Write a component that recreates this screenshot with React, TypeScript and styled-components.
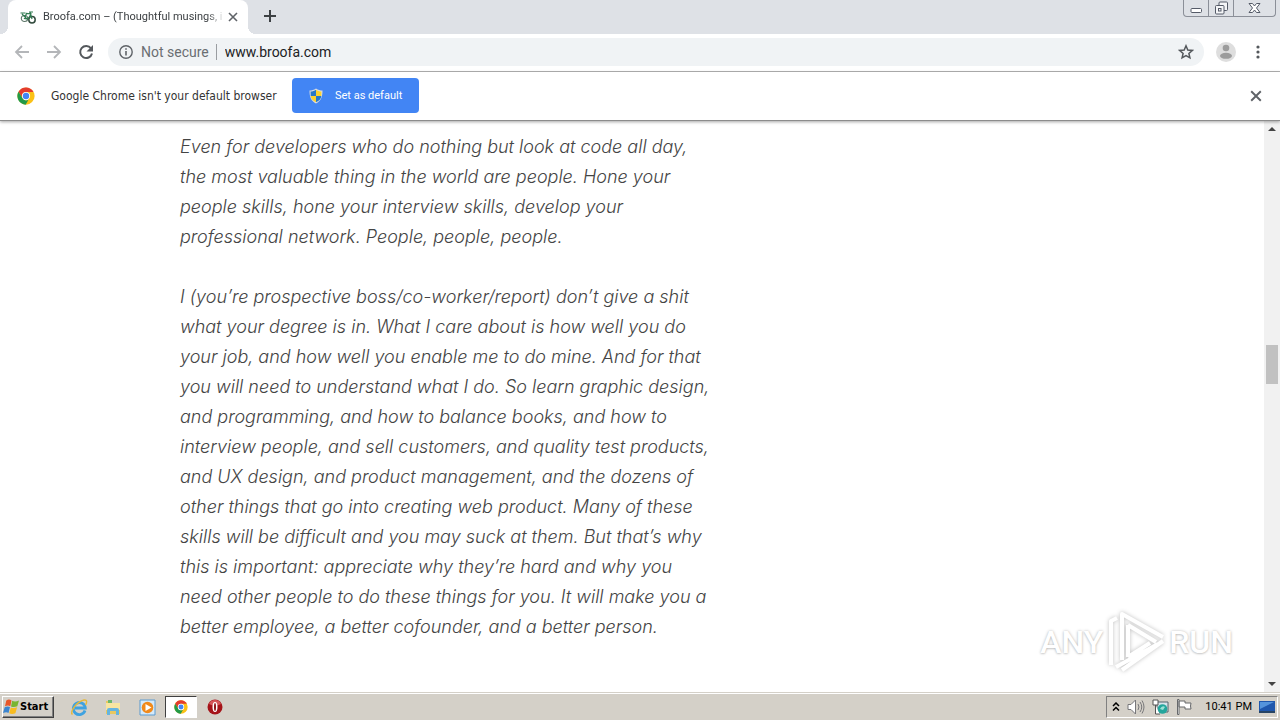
import React from "react";
import styled, { createGlobalStyle } from "styled-components";

const uiFont = `"Noto Sans", "DejaVu Sans", sans-serif`;

const GlobalStyle = createGlobalStyle`
  * { box-sizing: border-box; }
  body { margin: 0; background: #fff; overflow: hidden; }
  button, input { font: inherit; color: inherit; }
  svg { display: block; flex: none; }
`;

const Desktop = styled.div`
  display: flex;
  flex-direction: column;
  height: 100vh;
  font-family: ${uiFont};
`;

const TabStrip = styled.header`
  display: flex;
  align-items: flex-start;
  height: 34px;
  flex: none;
  padding-left: 8px;
  background: #dee1e6;
`;

const Tab = styled.div`
  position: relative;
  display: flex;
  align-items: center;
  width: 240px;
  height: 34px;
  padding: 0 10px 0 12px;
  border-radius: 8px 8px 0 0;
  background: #fff;
  &::before, &::after {
    content: "";
    position: absolute;
    bottom: 0;
    width: 8px;
    height: 8px;
  }
  &::before { left: -8px; background: radial-gradient(circle at 0 0, #dee1e6 8px, #fff 8px); }
  &::after { right: -8px; background: radial-gradient(circle at 100% 0, #dee1e6 8px, #fff 8px); }
`;

const TabTitle = styled.span`
  flex: 1;
  margin: 0 4px 0 7px;
  white-space: nowrap;
  font: 11px/16px Roboto, ${uiFont};
  color: #3c4043;
  mask-image: linear-gradient(to right, #000 164px, transparent 182px);
`;

const IconButton = styled.button<{ $w?: number }>`
  display: flex;
  align-items: center;
  justify-content: center;
  flex: none;
  width: ${(p) => p.$w ?? 32}px;
  height: 32px;
  padding: 0;
  border: 0;
  background: none;
`;

const WindowControls = styled.div`
  display: flex;
  height: 17px;
  margin: 0 4px 0 auto;
  border: 1px solid #8b8f98;
  border-top: 0;
  border-radius: 0 0 4px 4px;
`;

const WindowButton = styled.button<{ $w: number }>`
  display: flex;
  align-items: center;
  justify-content: center;
  width: ${(p) => p.$w}px;
  padding: 0;
  border: 0;
  background: none;
  & + & { border-left: 1px solid #8b8f98; }
`;

const Toolbar = styled.nav`
  display: flex;
  align-items: center;
  height: 38px;
  flex: none;
  padding: 0 6px 2px;
  border-bottom: 1px solid #b3b3b3;
  background: #fff;
`;

const AddressBar = styled.div`
  display: flex;
  align-items: center;
  flex: 1;
  height: 28px;
  margin: 0 6px;
  padding: 0 2px 0 10px;
  border-radius: 14px;
  background: #f0f3f5;
  font: 14px/20px Roboto, ${uiFont};
  color: #6a6e72;
`;

const Security = styled.span`
  margin-left: 7px;
  padding-right: 7px;
  border-right: 1px solid #9a9da1;
  line-height: 16px;
  white-space: nowrap;
`;

const UrlInput = styled.input`
  flex: 1;
  min-width: 0;
  padding: 0 8px;
  border: 0;
  outline: 0;
  background: none;
  color: #202124;
`;

const InfoBar = styled.section`
  position: relative;
  display: flex;
  align-items: center;
  height: 49px;
  flex: none;
  padding: 0 8px 1px 17px;
  border-bottom: 1px solid #8c8c8c;
  background: #fff;
  box-shadow: 0 1px 3px rgba(0, 0, 0, 0.35);
`;

const InfoText = styled.span`
  margin: 0 12px 0 16px;
  width: 229px;
  white-space: nowrap;
  font: 12px/18px "DejaVu Sans Condensed", "DejaVu Sans", sans-serif;
  color: #333;
`;

const DefaultButton = styled.button`
  display: flex;
  align-items: center;
  gap: 11px;
  width: 127px;
  height: 35px;
  padding: 0 16px;
  border: 0;
  border-radius: 4px;
  background: #4285f4;
  color: #fff;
  font: 11px/16px Roboto, ${uiFont};
  white-space: nowrap;
`;

const Spacer = styled.div`
  flex: 1;
`;

const Viewport = styled.div`
  display: flex;
  flex: 1;
  min-height: 0;
  background: #fff;
`;

const Page = styled.main`
  position: relative;
  flex: 1;
  padding: 11px 24px 0 180px;
`;

const Paragraph = styled.p`
  margin: 0 0 30px;
  white-space: nowrap;
  font: italic 300 18px/30px Inter, "Liberation Sans", sans-serif;
  color: #444;
`;

const Scrollbar = styled.div`
  display: flex;
  flex-direction: column;
  align-items: center;
  width: 16px;
  background: #f1f1f1;
`;

const ScrollButton = styled.button`
  display: flex;
  align-items: center;
  justify-content: center;
  width: 16px;
  height: 16px;
  padding: 0;
  border: 0;
  background: none;
`;

const Track = styled.div`
  display: flex;
  flex-direction: column;
  flex: 1;
`;

const TrackGap = styled.div<{ $grow: number }>`
  flex: ${(p) => p.$grow};
`;

const Thumb = styled.div`
  width: 12px;
  height: 39px;
  background: #c1c1c1;
`;

const Watermark = styled.div`
  position: absolute;
  right: 31px;
  bottom: 18px;
  display: flex;
  align-items: center;
  gap: 4px;
  color: #fff;
  font: 500 32px/64px Roboto, sans-serif;
  text-shadow: 0 0 3px rgba(0, 0, 0, 0.25), 0 1px 2px rgba(0, 0, 0, 0.12);
  svg { filter: drop-shadow(0 0 2px rgba(0, 0, 0, 0.25)); }
`;

const Taskbar = styled.footer`
  display: flex;
  align-items: center;
  height: 28px;
  flex: none;
  padding: 1px 2px 0;
  border-top: 1px solid #d4d0c8;
  box-shadow: inset 0 1px #fff;
  background: #d4d0c8;
`;

const StartButton = styled.button`
  display: flex;
  align-items: center;
  width: 52px;
  height: 22px;
  margin-right: 9px;
  padding: 0;
  border: 1px solid;
  border-color: #fff #404040 #404040 #fff;
  box-shadow: inset -1px -1px #808080;
  background: #d4d0c8;
  color: #000;
  font: bold 11px/16px "DejaVu Sans Condensed", "DejaVu Sans", sans-serif;
`;

const TaskButton = styled.button<{ $active?: boolean }>`
  display: flex;
  align-items: center;
  justify-content: center;
  width: 32px;
  height: 22px;
  margin-right: 2px;
  padding: 0;
  border: 1px solid;
  border-color: ${(p) => (p.$active ? "#404040 #fff #fff #404040" : "transparent")};
  background: ${(p) => (p.$active ? "#fff" : "none")};
`;

const Tray = styled.div`
  display: flex;
  align-items: center;
  gap: 7px;
  height: 22px;
  margin-left: auto;
  padding: 0 2px 0 5px;
  border: 1px solid;
  border-color: #808080 #fff #fff #808080;
`;

const Clock = styled.time`
  margin-left: 5px;
  white-space: nowrap;
  color: #000;
  font: 11px/16px Roboto, ${uiFont};
`;

const ChromeLogo = ({ size }: { size: number }) => (
  <svg width={size} height={size} viewBox="0 0 48 48" aria-hidden="true">
    <circle cx="24" cy="24" r="23" fill="#fbc116" />
    <path d="M4 12.600A23 23 0 0 1 44 13H24A11 11 0 0 0 14.500 29.500z" fill="#e33b2e" />
    <path d="M4 12.600 14.500 29.500A11 11 0 0 0 31 33L23 47A23 23 0 0 1 4 12.600z" fill="#229a48" />
    <circle cx="24" cy="24" r="11" fill="#fff" />
    <circle cx="24" cy="24" r="8.500" fill="#4285f4" />
  </svg>
);

const BikeIcon = () => (
  <svg width="16" height="16" viewBox="0 0 16 16" fill="none" aria-hidden="true">
    <ellipse cx="4.500" cy="9.500" rx="3.200" ry="3" stroke="#5b7567" strokeWidth="1.100" />
    <circle cx="12" cy="10.800" r="3.200" stroke="#334b3e" strokeWidth="1.500" />
    <path d="M.5 4h5M4.500 9.500l2-5 4.500.5-3 5zM9 3h4M10 3l2 7M2 5l5 5" stroke="#2f7a50" strokeWidth="1.200" />
  </svg>
);

const CrossIcon = ({ size, color = "#5f6368" }: { size: number; color?: string }) => (
  <svg width={size} height={size} viewBox="0 0 10 10" aria-hidden="true">
    <path d="M1 1l8 8M9 1L1 9" stroke={color} strokeWidth="1.600" />
  </svg>
);

const ArrowIcon = ({ flip }: { flip?: boolean }) => (
  <svg width="16" height="16" viewBox="0 0 16 16" fill="none" stroke="#b4b6b9" strokeWidth="1.800" aria-hidden="true">
    <path d={flip ? "M1 8h13M8 2l6 6-6 6" : "M15 8H2M8 2L2 8l6 6"} />
  </svg>
);

const ShieldIcon = () => (
  <svg width="16" height="16" viewBox="0 0 16 16" aria-hidden="true">
    <path d="M8 .5C6 2 3.500 2.500 1.500 2.500 1.500 9 3 13 8 15.500 13 13 14.500 9 14.500 2.500 12.500 2.500 10 2 8 .5z" fill="#d9dde2" />
    <path d="M8 1.800C6.500 3 4.500 3.500 2.600 3.600L2.700 8H8z" fill="#2778c8" />
    <path d="M8 1.800c1.500 1.200 3.500 1.700 5.400 1.800L13.300 8H8z" fill="#fbd22f" />
    <path d="M2.700 8H8v6.300C4.800 12.700 3 11 2.700 8z" fill="#fbd22f" />
    <path d="M13.300 8H8v6.300c3.200-1.600 5-3.300 5.300-6.300z" fill="#2778c8" />
  </svg>
);

const WindowsFlag = () => (
  <svg width="17" height="18" viewBox="0 0 17 16" aria-hidden="true">
    <path d="M3.300 1.500C5.500 0 7 .5 8.500 1.500L7.300 7.200C5.800 6.400 4.300 6.200 2 7.300z" fill="#e8572a" />
    <path d="M9.200 1.800c1.800.9 4.300.9 6.800-.3l-1.700 5.800c-2.400 1.100-4.500 1-6.300.2z" fill="#79b532" />
    <path d="M1.700 8.200c2.300-1.100 3.800-.9 5.300-.1L5.500 14C4 13 2.500 12.900 0 14.100z" fill="#3b85d0" />
    <path d="M7.800 8.400c1.800.8 4 .9 6.300-.2l-1.700 6c-2.300 1.100-4.500 1-6.200.1z" fill="#f8bc20" />
  </svg>
);

const IeIcon = () => (
  <svg width="18" height="18" viewBox="0 0 18 18" fill="none" aria-hidden="true">
    <path d="M15 12.500A6 6 0 1 1 15.300 10H5" stroke="#3fa2e0" strokeWidth="2.800" />
    <path d="M2.500 16.500C-1 14 7 3.500 14 2c4-.5 2.500 3.500 1.500 5" stroke="#e6b83a" strokeWidth="1.400" />
  </svg>
);

const FolderIcon = () => (
  <svg width="18" height="18" viewBox="0 0 18 18" aria-hidden="true">
    <path d="M2 3h5l1 2h8v11H2z" fill="#e9c860" />
    <path d="M4 2h4v3H4z" fill="#6cb86a" />
    <path d="M2 5h14v7H2z" fill="#f8e5a0" />
    <path d="M3 17v-5q0-2 2-2h8q2 0 2 2v5h-3v-4H6v4z" fill="#65b4df" />
  </svg>
);

const PlayerIcon = () => (
  <svg width="17" height="17" viewBox="0 0 17 17" aria-hidden="true">
    <path d="M1 1h15v15H1z" fill="#d5eafa" stroke="#5b9bd0" />
    <circle cx="8.500" cy="8.500" r="5.800" fill="#f18a1b" />
    <path d="M6.500 5l6 3.500-6 3.500z" fill="#fff" />
  </svg>
);

const OperaIcon = () => (
  <svg width="16" height="16" viewBox="0 0 16 16" aria-hidden="true">
    <circle cx="8" cy="8" r="7.500" fill="#a51319" />
    <path d="M2 5a6.500 6.500 0 0 1 12 0q-6 3-12 0z" fill="#d6575a" />
    <ellipse cx="8" cy="8" rx="2.500" ry="5" fill="#fff" />
    <ellipse cx="8" cy="8" rx="1" ry="4" fill="#8c1014" />
  </svg>
);

const App = () => (
  <Desktop>
    <GlobalStyle />
    <TabStrip>
      <Tab>
        <BikeIcon />
        <TabTitle>Broofa.com – (Thoughtful musings, i</TabTitle>
        <IconButton $w={12} aria-label="Close tab"><CrossIcon size={10} /></IconButton>
      </Tab>
      <IconButton $w={44} aria-label="New tab">
        <svg width="12" height="12" viewBox="0 0 12 12" stroke="#3c4043" strokeWidth="2"><path d="M6 0v12M0 6h12" /></svg>
      </IconButton>
      <WindowControls>
        <WindowButton $w={24} aria-label="Minimize">
          <svg width="13" height="12" viewBox="0 0 13 12" fill="#fff" stroke="#555b68"><rect x="1" y="6.500" width="10.500" height="4" rx="1" /></svg>
        </WindowButton>
        <WindowButton $w={25} aria-label="Restore">
          <svg width="13" height="14" viewBox="0 0 13 14" fill="#f4f5f7" stroke="#555b68"><rect x="4" y="1" width="8.500" height="8.500" rx="1" /><rect x=".5" y="4.500" width="8.500" height="8.500" rx="1" /><rect x="3.500" y="7.500" width="2.500" height="2.500" /></svg>
        </WindowButton>
        <WindowButton $w={42} aria-label="Close">
          <svg width="13" height="12" viewBox="0 0 13 12" fill="#fff" stroke="#555b68"><path d="M1 1.500h3.500l2 2.500 2-2.500H12L8.500 6l3.500 4.500H8.500l-2-2.500-2 2.500H1L4.500 6z" /></svg>
        </WindowButton>
      </WindowControls>
    </TabStrip>
    <Toolbar>
      <IconButton aria-label="Back"><ArrowIcon /></IconButton>
      <IconButton aria-label="Forward"><ArrowIcon flip /></IconButton>
      <IconButton aria-label="Reload">
        <svg width="16" height="16" viewBox="0 0 16 16"><path d="M13 4.400A6 6 0 1 0 14 9.500" fill="none" stroke="#54585c" strokeWidth="2" /><path d="M15 1v6.500H8.500z" fill="#54585c" /></svg>
      </IconButton>
      <AddressBar>
        <svg width="16" height="16" viewBox="0 0 16 16" fill="none" stroke="#5f6368"><circle cx="8" cy="8" r="6.200" strokeWidth="1.400" /><path d="M8 7v4.500M8 4.200v1.600" strokeWidth="1.600" /></svg>
        <Security>Not secure</Security>
        <UrlInput aria-label="Address" defaultValue="www.broofa.com" />
        <IconButton aria-label="Bookmark">
          <svg width="16" height="16" viewBox="0 0 16 16" fill="none" stroke="#54585c" strokeWidth="1.500"><path d="M8 1.800l1.800 4.200 4.500.4-3.400 3 1 4.400L8 11.500l-3.900 2.300 1-4.400-3.400-3L6.200 6z" /></svg>
        </IconButton>
      </AddressBar>
      <IconButton aria-label="Profile">
        <svg width="20" height="20" viewBox="0 0 20 20"><circle cx="10" cy="10" r="10" fill="#dedede" /><circle cx="10" cy="6" r="3.300" fill="#9c9c9c" /><ellipse cx="10" cy="13.800" rx="6" ry="3" fill="#9c9c9c" /></svg>
      </IconButton>
      <IconButton aria-label="Menu">
        <svg width="4" height="14" viewBox="0 0 4 14" fill="#54585c"><circle cx="2" cy="2" r="1.600" /><circle cx="2" cy="7" r="1.600" /><circle cx="2" cy="12" r="1.600" /></svg>
      </IconButton>
    </Toolbar>
    <InfoBar>
      <ChromeLogo size={18} />
      <InfoText>Google Chrome isn't your default browser</InfoText>
      <DefaultButton><ShieldIcon />Set as default</DefaultButton>
      <Spacer />
      <IconButton aria-label="Dismiss"><CrossIcon size={12} /></IconButton>
    </InfoBar>
    <Viewport>
      <Page>
        <Paragraph>
          Even for developers who do nothing but look at code all day,<br />
          the most valuable thing in the world are people. Hone your<br />
          people skills, hone your interview skills, develop your<br />
          professional network. People, people, people.
        </Paragraph>
        <Paragraph>
          I (you’re prospective boss/co-worker/report) don’t give a shit<br />
          what your degree is in. What I care about is how well you do<br />
          your job, and how well you enable me to do mine. And for that<br />
          you will need to understand what I do. So learn graphic design,<br />
          and programming, and how to balance books, and how to<br />
          interview people, and sell customers, and quality test products,<br />
          and UX design, and product management, and the dozens of<br />
          other things that go into creating web product. Many of these<br />
          skills will be difficult and you may suck at them. But that’s why<br />
          this is important: appreciate why they’re hard and why you<br />
          need other people to do these things for you. It will make you a<br />
          better employee, a better cofounder, and a better person.
        </Paragraph>
        <Watermark>
          <span>ANY</span>
          <svg width="58" height="64" viewBox="0 0 58 64" fill="none" stroke="#fff" strokeWidth="4" strokeLinejoin="round">
            <path d="M15 50V4l41 23M4 55V11l6-3M21 15l28 17M21 15v32M56 31L15 60M51 34L9 57M21 47l22-14" />
          </svg>
          <span>RUN</span>
        </Watermark>
      </Page>
      <Scrollbar>
        <ScrollButton aria-label="Scroll up"><svg width="8" height="4" viewBox="0 0 8 4"><path d="M0 4l4-4 4 4z" fill="#444" /></svg></ScrollButton>
        <Track>
          <TrackGap $grow={208} />
          <Thumb />
          <TrackGap $grow={292} />
        </Track>
        <ScrollButton aria-label="Scroll down"><svg width="8" height="4" viewBox="0 0 8 4"><path d="M0 0l4 4 4-4z" fill="#444" /></svg></ScrollButton>
      </Scrollbar>
    </Viewport>
    <Taskbar>
      <StartButton><WindowsFlag />Start</StartButton>
      <TaskButton aria-label="Internet Explorer"><IeIcon /></TaskButton>
      <TaskButton aria-label="Explorer"><FolderIcon /></TaskButton>
      <TaskButton aria-label="Media Player"><PlayerIcon /></TaskButton>
      <TaskButton aria-label="Chrome" $active><ChromeLogo size={14} /></TaskButton>
      <TaskButton aria-label="Opera"><OperaIcon /></TaskButton>
      <Tray>
        <svg width="8" height="10" viewBox="0 0 8 10" fill="none" stroke="#000" strokeWidth="1.500"><path d="M1 4l3-3 3 3M1 8.500l3-3 3 3" /></svg>
        <svg width="18" height="16" viewBox="0 0 18 16" fill="#fff" stroke="#77777a"><path d="M1 5.500h3L8.500 1v14L4 10.500H1z" /><path d="M11 5q2 3 0 6M13 3q3.500 5 0 10M15 1.500q4 6.500 0 13" fill="none" /></svg>
        <svg width="17" height="16" viewBox="0 0 17 16"><path d="M5 3h11v10H5z" fill="#d8e4ec" stroke="#55636c" /><path d="M1 1h5v5H1zM3.500 6v9H8" fill="#fff" stroke="#555" /><circle cx="10.500" cy="10" r="4.800" fill="#24a69c" /><path d="M8 10q2-4 5-2l-2 3z" fill="#9be0d5" /></svg>
        <svg width="17" height="16" viewBox="0 0 17 16" fill="#fff" stroke="#66686b"><path d="M1.500.5h1.500v15H1.500zM3 2h6v2h6q-1 3 0 6H9V8H3z" /></svg>
        <Clock>10:41 PM</Clock>
        <svg width="16" height="14" viewBox="0 0 16 14"><path d="M0 1h16v10H0z" fill="#1f57ad" /><path d="M1 2h14L1 9z" fill="#5594dc" /><path d="M0 11h16v2H0z" fill="#274464" /></svg>
      </Tray>
    </Taskbar>
  </Desktop>
);

export default App;
